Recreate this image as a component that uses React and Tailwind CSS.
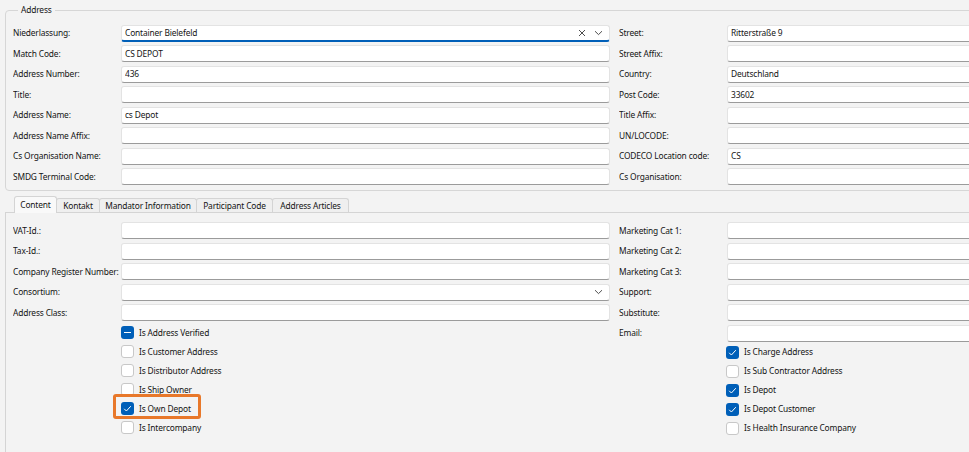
import React from 'react';

const Chevron = () => (
    <svg width="9" height="6" viewBox="0 0 9 6" className="shrink-0">
        <path d="M1 1.2 L4.5 4.6 L8 1.2" stroke="#3a3a3a" strokeWidth="0.9" fill="none" />
    </svg>
);

const Cross = () => (
    <svg width="8" height="8" viewBox="0 0 8 8" className="shrink-0">
        <path d="M1 1 L7 7 M7 1 L1 7" stroke="#3a3a3a" strokeWidth="0.9" fill="none" />
    </svg>
);

const Input = ({ value = '', focused = false, combo = false, clear = false }) => (
    <div
        className={`h-[17px] flex-1 min-w-0 bg-white rounded-[3px] border border-[#e3e3e3] flex items-center pl-[3px] pr-[6px] ${
            focused ? 'border-b-2 border-b-[#005fb8]' : 'border-b-[#9b9b9b]'
        }`}
    >
        <span className="flex-1 truncate">{value}</span>
        {clear && (
            <span className="mr-[8px] flex items-center">
                <Cross />
            </span>
        )}
        {combo && <Chevron />}
    </div>
);

const Row = ({ label, children }) => (
    <div className="flex items-center h-[17px]">
        <div className="w-[108px] shrink-0 whitespace-nowrap overflow-hidden">{label}</div>
        {children}
    </div>
);

const Check = ({ state }) => (
    <span
        className={`w-[13px] h-[13px] shrink-0 rounded-[3px] flex items-center justify-center ${
            state ? 'bg-[#005fb8]' : 'bg-white border border-[#c8c8c8]'
        }`}
    >
        {state === 'checked' && (
            <svg width="13" height="13" viewBox="0 0 13 13">
                <path d="M3.2 6.8 L5.4 9 L9.8 4.2" stroke="white" strokeWidth="1" fill="none" />
            </svg>
        )}
        {state === 'mixed' && <span className="w-[7px] h-[1.5px] bg-white" />}
    </span>
);

const CheckRow = ({ label, state, highlight }) => (
    <div className="relative flex items-center h-[13px] gap-[5px]">
        <Check state={state} />
        <span>{label}</span>
        {highlight && (
            <span className="absolute left-[-8px] top-[-8px] w-[88px] h-[25px] border-[3px] border-[#e8782a] rounded-[3px]" />
        )}
    </div>
);

const topLeft = [
    ['Niederlassung:', 'Container Bielefeld'],
    ['Match Code:', 'CS DEPOT'],
    ['Address Number:', '436'],
    ['Title:', ''],
    ['Address Name:', 'cs Depot'],
    ['Address Name Affix:', ''],
    ['Cs Organisation Name:', ''],
    ['SMDG Terminal Code:', ''],
];

const topRight = [
    ['Street:', 'Ritterstraße 9'],
    ['Street Affix:', ''],
    ['Country:', 'Deutschland'],
    ['Post Code:', '33602'],
    ['Title Affix:', ''],
    ['UN/LOCODE:', ''],
    ['CODECO Location code:', 'CS'],
    ['Cs Organisation:', ''],
];

const tabs = [
    ['Content', 'w-[43px]'],
    ['Kontakt', 'w-[44px]'],
    ['Mandator Information', 'w-[98px]'],
    ['Participant Code', 'w-[77px]'],
    ['Address Articles', 'w-[77px]'],
];

const leftChecks = [
    ['Is Address Verified', 'mixed'],
    ['Is Customer Address', null],
    ['Is Distributor Address', null],
    ['Is Ship Owner', null],
    ['Is Own Depot', 'checked', true],
    ['Is Intercompany', null],
];

const rightChecks = [
    ['Is Charge Address', 'checked'],
    ['Is Sub Contractor Address', null],
    ['Is Depot', 'checked'],
    ['Is Depot Customer', 'checked'],
    ['Is Health Insurance Company', null],
];

export default function App() {
    return (
        <div className="w-[969px] h-[452px] overflow-hidden bg-[#f3f3f3] text-[#141414] text-[8.4px] leading-[12px] tracking-[-0.15px] font-['Noto_Sans',sans-serif]">
            <div className="w-[1100px] pt-[4px] pl-[5px]">
                {/* Address group */}
                <fieldset className="border border-[#d6d6d6] rounded-[4px] pl-[7px] pr-0 pb-[5px]">
                    <legend className="ml-[5px] px-[3px] h-[12px]">Address</legend>
                    <div className="flex pt-[8.5px]">
                        <div className="w-[597px] flex flex-col gap-[3.5px]">
                            {topLeft.map(([l, v], i) => (
                                <Row key={l} label={l}>
                                    <Input value={v} focused={i === 0} combo={i === 0} clear={i === 0} />
                                </Row>
                            ))}
                        </div>
                        <div className="ml-[9px] flex-1 flex flex-col gap-[3.5px]">
                            {topRight.map(([l, v]) => (
                                <Row key={l} label={l}>
                                    <Input value={v} />
                                </Row>
                            ))}
                        </div>
                    </div>
                </fieldset>

                {/* Tabs */}
                <div className="mt-[4px] pl-[9px] flex items-end h-[17px]">
                    {tabs.map(([t, w], i) => (
                        <div
                            key={t}
                            className={`${w} flex items-center justify-center border border-b-0 border-[#d4d4d4] rounded-t-[3px] ${
                                i === 0 ? 'h-[17px] bg-[#f9f9f9] relative top-[1px]' : 'h-[14px] bg-[#efefef] -ml-px'
                            }`}
                        >
                            {t}
                        </div>
                    ))}
                </div>

                {/* Tab panel */}
                <div className="border-t border-l border-[#d4d4d4] h-[300px] pl-[7px] pt-[9px]">
                    <div className="flex">
                        <div className="w-[597px] flex flex-col">
                            <div className="flex flex-col gap-[3.5px]">
                                <Row label="VAT-Id.:"><Input /></Row>
                                <Row label="Tax-Id.:"><Input /></Row>
                                <Row label="Company Register Number:"><Input /></Row>
                                <Row label="Consortium:"><Input combo /></Row>
                                <Row label="Address Class:"><Input /></Row>
                            </div>
                            <div className="ml-[108px] mt-[5px] flex flex-col gap-[6px]">
                                {leftChecks.map(([l, s, h]) => (
                                    <CheckRow key={l} label={l} state={s} highlight={h} />
                                ))}
                            </div>
                        </div>
                        <div className="ml-[9px] flex-1 flex flex-col">
                            <div className="flex flex-col gap-[3.5px]">
                                <Row label="Marketing Cat 1:"><Input /></Row>
                                <Row label="Marketing Cat 2:"><Input /></Row>
                                <Row label="Marketing Cat 3:"><Input /></Row>
                                <Row label="Support:"><Input /></Row>
                                <Row label="Substitute:"><Input /></Row>
                                <Row label="Email:"><Input /></Row>
                            </div>
                            <div className="ml-[107px] mt-[4px] flex flex-col gap-[6px]">
                                {rightChecks.map(([l, s]) => (
                                    <CheckRow key={l} label={l} state={s} />
                                ))}
                            </div>
                        </div>
                    </div>
                </div>
            </div>
        </div>
    );
}
